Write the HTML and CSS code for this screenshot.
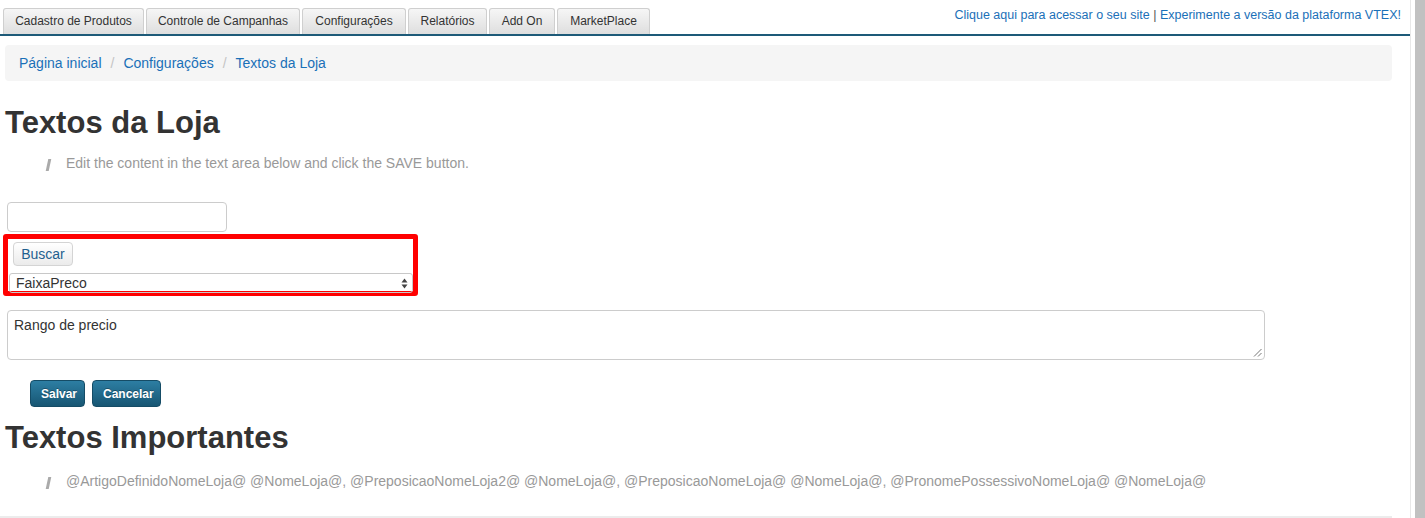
FILE: index.html
```html
<!DOCTYPE html>
<html lang="pt">
<head>
<meta charset="utf-8">
<title>Textos da Loja</title>
<link rel="stylesheet" href="styles.css">
</head>
<body>
<div class="page">
  <div class="main">
    <header class="topbar">
      <nav class="tabs">
        <a class="tab">Cadastro de Produtos</a>
        <a class="tab">Controle de Campanhas</a>
        <a class="tab">Configurações</a>
        <a class="tab">Relatórios</a>
        <a class="tab">Add On</a>
        <a class="tab">MarketPlace</a>
      </nav>
      <div class="toplinks"><a>Clique aqui para acessar o seu site</a> <span class="pipe">|</span> <a>Experimente a versão da plataforma VTEX!</a></div>
    </header>
    <div class="content">
      <ul class="breadcrumb">
        <li><a>Página inicial</a></li>
        <li class="sep">/</li>
        <li><a>Configurações</a></li>
        <li class="sep">/</li>
        <li><a>Textos da Loja</a></li>
      </ul>
      <h1 class="title">Textos da Loja</h1>
      <blockquote class="quote"><span class="qmark"></span><span>Edit the content in the text area below and click the SAVE button.</span></blockquote>
      <input class="search" type="text">
      <div class="highlight">
        <button class="btn-light">Buscar</button>
        <div class="select"><span>FaixaPreco</span>
          <svg class="arrows" width="7" height="11" viewBox="0 0 7 11"><path d="M3.5 0.5 L6.5 4.5 L0.5 4.5 Z" fill="#444"/><path d="M3.5 10.5 L6.5 6.5 L0.5 6.5 Z" fill="#444"/></svg>
        </div>
      </div>
      <div class="textarea"><span>Rango de precio</span>
        <svg class="grip" width="9" height="9" viewBox="0 0 9 9"><path d="M8.5 1 L1 8.5 M8.5 5 L5 8.5" stroke="#777" stroke-width="1"/></svg>
      </div>
      <div class="actions">
        <button class="btn-dark">Salvar</button>
        <button class="btn-dark">Cancelar</button>
      </div>
      <h2 class="subtitle">Textos Importantes</h2>
      <blockquote class="quote quote2"><span class="qmark"></span><span>@ArtigoDefinidoNomeLoja@ @NomeLoja@, @PreposicaoNomeLoja2@ @NomeLoja@, @PreposicaoNomeLoja@ @NomeLoja@, @PronomePossessivoNomeLoja@ @NomeLoja@</span></blockquote>
      <div class="bottomline"></div>
    </div>
  </div>
  <div class="scrollstrip"><div class="scrollbar"></div></div>
</div>
</body>
</html>
```
FILE: styles.css
```css
* { box-sizing: border-box; }
html, body { margin: 0; padding: 0; background: #fff; }
body {
  font-family: "Liberation Sans", Arial, Helvetica, sans-serif;
  color: #333;
  width: 1425px;
  height: 518px;
  overflow: hidden;
}
.page { display: flex; height: 518px; }
.main { width: 1410px; }
.topbar {
  display: flex;
  justify-content: space-between;
  align-items: flex-start;
  border-bottom: 2px solid #1d5a78;
  height: 36px;
  padding-left: 3px;
}
.tabs { display: flex; gap: 2px; padding-top: 8px; }
.tab {
  display: block;
  height: 26px;
  line-height: 24px;
  padding: 0 9px;
  font-size: 12px;
  color: #333;
  text-align: center;
  border: 1px solid #cfcfcf;
  border-bottom: none;
  border-radius: 3px 3px 0 0;
  background: linear-gradient(#f6f6f6, #dedede);
}
.tab:nth-child(1) { width: 141px; }
.tab:nth-child(2) { width: 154px; }
.tab:nth-child(3) { width: 104px; }
.tab:nth-child(4) { width: 79px; }
.tab:nth-child(5) { width: 66px; }
.tab:nth-child(6) { width: 93px; }
.toplinks {
  font-size: 12.5px;
  padding-top: 8px;
  padding-right: 9px;
  color: #1a70b8;
}
.toplinks a { color: #1a70b8; }
.pipe { color: #555; }
.content { padding: 9px 18px 0 5px; }
.breadcrumb {
  list-style: none;
  margin: 0;
  display: flex;
  align-items: center;
  gap: 9px;
  height: 36px;
  padding: 0 14px;
  background: #f5f5f5;
  border-radius: 4px;
  font-size: 14px;
}
.breadcrumb a { color: #1a70b8; }
.breadcrumb .sep { color: #c4c4c4; }
.title {
  margin: 22px 0 0 0;
  font-size: 31px;
  line-height: 40px;
  font-weight: bold;
  color: #333;
}
.quote {
  margin: 11px 0 0 42px;
  display: flex;
  align-items: center;
  gap: 16px;
  font-size: 14px;
  color: #999;
  line-height: 18px;
}
.qmark {
  display: inline-block;
  width: 3px;
  height: 12px;
  background: #aaa;
  transform: skewX(-12deg);
  margin-top: 3px;
}
.search {
  display: block;
  margin: 30px 0 0 2px;
  width: 220px;
  height: 30px;
  border: 1px solid #ccc;
  border-radius: 4px;
  background: #fff;
}
.highlight {
  margin: 2px 0 0 -2px;
  width: 415px;
  height: 62px;
  border: 5px solid #ff0000;
  border-radius: 3px;
  padding: 3px 0 0 5px;
}
.btn-light {
  display: block;
  height: 24px;
  width: 60px;
  padding: 0;
  font-family: inherit;
  font-size: 14px;
  color: #1f5f8f;
  background: linear-gradient(#ffffff, #ebebeb);
  border: 1px solid #d4d4d4;
  border-radius: 4px;
}
.select {
  margin: 7px 0 0 -4px;
  width: 404px;
  height: 20px;
  border: 1px solid #c8c8c8;
  border-radius: 3px;
  display: flex;
  align-items: center;
  justify-content: space-between;
  padding: 0 4px 0 6px;
  font-size: 14px;
  color: #333;
}
.arrows { display: block; }
.textarea {
  position: relative;
  margin: 14px 0 0 2px;
  width: 1258px;
  height: 50px;
  border: 1px solid #ccc;
  border-radius: 4px;
  padding: 6px 6px;
  font-size: 14px;
  color: #333;
}
.grip { position: absolute; right: 2px; bottom: 2px; }
.actions {
  display: flex;
  gap: 7px;
  margin: 20px 0 0 25px;
}
.btn-dark {
  height: 27px;
  padding: 0 10px;
  font-family: inherit;
  font-size: 12px;
  font-weight: bold;
  color: #fff;
  text-shadow: 0 -1px 0 rgba(0,0,0,0.3);
  background: linear-gradient(#2d7ea3, #175673);
  border: 1px solid #154c66;
  border-radius: 4px;
}
.btn-dark:first-child { width: 55px; }
.btn-dark:last-child { width: 69px; }
.subtitle {
  margin: 13px 0 0 0;
  font-size: 31px;
  line-height: 36px;
  font-weight: bold;
  color: #333;
}
.quote2 { margin-top: 16px; }
.bottomline {
  margin: 26px 0 0 -5px;
  height: 2px;
  background: #ececec;
}
.scrollstrip {
  width: 15px;
  border-left: 1px solid #e8e8e8;
  padding-left: 4px;
  display: flex;
}
.scrollbar { flex: 1; background: #c1c1c1; }
```
